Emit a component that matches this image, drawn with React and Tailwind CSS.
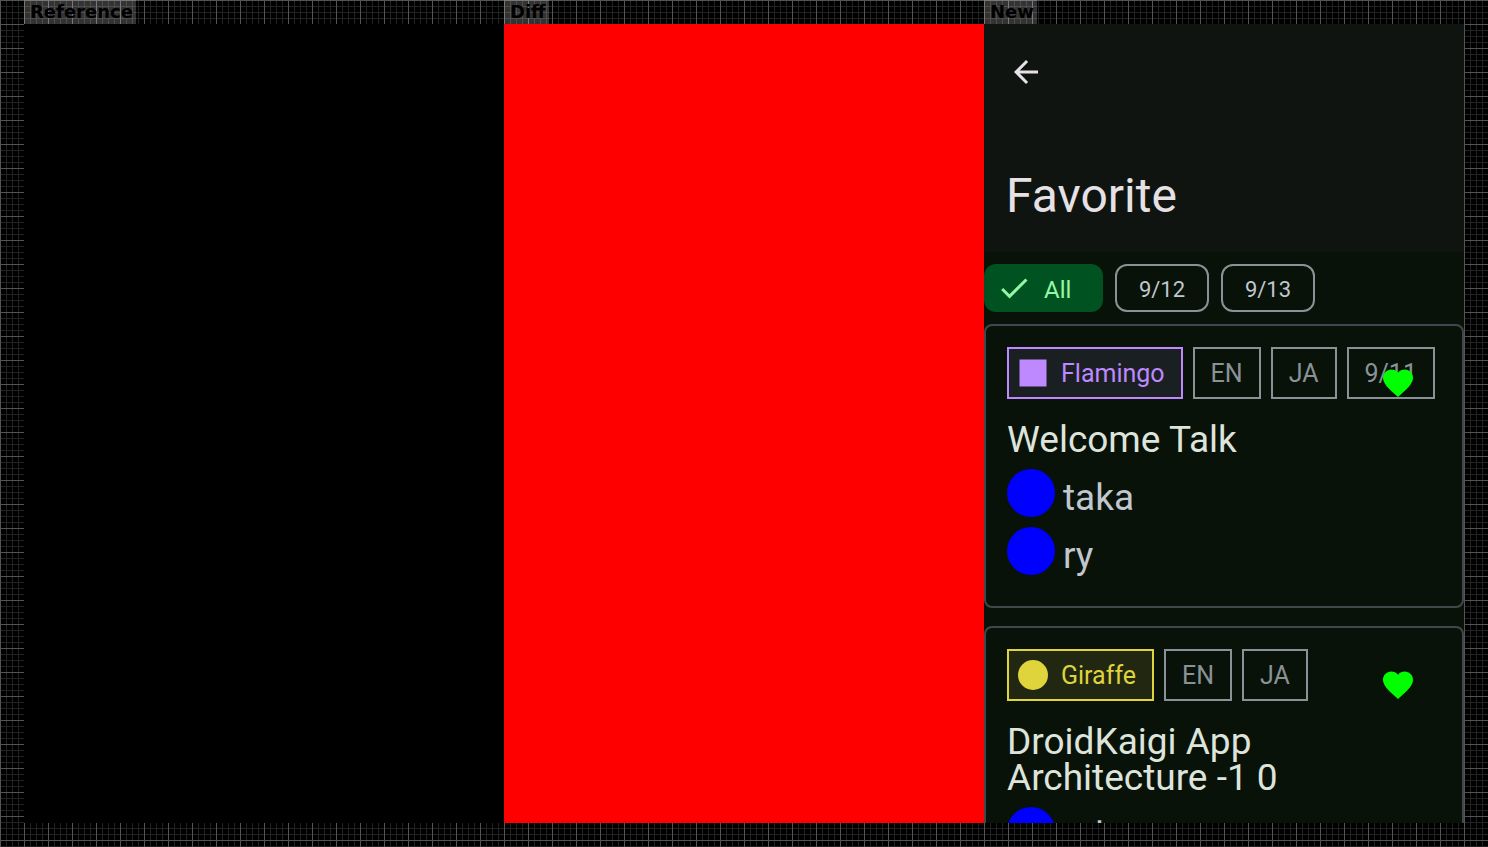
const ROOMS = {
  flamingo: {
    name: "Flamingo",
    tag: "border-[#be88ff] bg-[#1a2022] text-[#be88ff]",
    shape: <rect x="4.5" y="4.5" width="27" height="27" />,
  },
  giraffe: {
    name: "Giraffe",
    tag: "border-[#dfd43c] bg-[#222712] text-[#dfd43c]",
    shape: <circle cx="18" cy="18" r="15" />,
  },
};

const SESSIONS = [
  {
    title: "Welcome Talk",
    room: ROOMS.flamingo,
    labels: ["EN", "JA", "9/11"],
    speakers: ["taka", "ry"],
  },
  {
    title: "DroidKaigi App Architecture -1 0",
    room: ROOMS.giraffe,
    labels: ["EN", "JA"],
    speakers: ["taka"],
  },
];

function Panel({ label, className, children }) {
  return (
    <section className="flex min-w-0 flex-1 flex-col items-start">
      <h2 className="h-6 bg-white/20 pr-[3px] pl-1.5 font-['DejaVu_Sans',sans-serif] text-[18px] leading-6 font-bold text-black">
        {label}
      </h2>
      <div className={"min-h-0 w-full flex-1 overflow-hidden " + className}>{children}</div>
    </section>
  );
}

function DateChip({ children }) {
  return (
    <button
      type="button"
      className="h-12 min-w-[94px] rounded-xl border-2 border-[#8b9297] px-5 pt-1 text-[22px] leading-6 text-[#c1c7ce]"
    >
      {children}
    </button>
  );
}

function SessionCard({ session }) {
  return (
    <article className="relative rounded-lg border-2 border-[#41484d] p-[21px]">
      <div className="flex gap-2.5">
        <span
          className={
            "flex h-[52px] items-center gap-2.5 border-2 pr-4 pl-1.5 text-[25px] leading-8 " +
            session.room.tag
          }
        >
          <svg viewBox="0 0 36 36" className="size-9" fill="currentColor" aria-hidden="true">
            {session.room.shape}
          </svg>
          <span className="pt-0.5">{session.room.name}</span>
        </span>
        {session.labels.map((label) => (
          <span
            key={label}
            className="flex h-[52px] items-center border-2 border-[#8b9297] px-4 pt-0.5 text-[25px] leading-8 text-[#8b9297]"
          >
            {label}
          </span>
        ))}
      </div>
      <h3 className="mt-[23px] w-[330px] max-w-full text-[37px] leading-9 text-[#dee4db]">
        {session.title}
      </h3>
      <ul className="mt-[11px]">
        {session.speakers.map((name) => (
          <li key={name} className="flex items-start gap-2">
            <span className="size-12 rounded-full bg-[#0000ff]" />
            <span className="text-[37px] leading-[58px] text-[#c1c7ce]">{name}</span>
          </li>
        ))}
      </ul>
      <button
        type="button"
        aria-label="Remove from favorites"
        className="absolute top-[9px] right-4 flex size-24 items-center justify-center"
      >
        <svg viewBox="0 0 24 24" className="size-9" fill="#00ff00" aria-hidden="true">
          <path d="M12 21.35l-1.45-1.32C5.4 15.36 2 12.28 2 8.5 2 5.42 4.42 3 7.5 3c1.74 0 3.41.81 4.5 2.09C13.09 3.81 14.76 3 16.5 3 19.58 3 22 5.42 22 8.5c0 3.78-3.4 6.86-8.55 11.54L12 21.35z" />
        </svg>
      </button>
    </article>
  );
}

function FavoriteScreen() {
  return (
    <div className="font-[Roboto,sans-serif]">
      <header className="flex h-[228px] flex-col items-start justify-between bg-[#101411] px-[22px] pt-[30px] pb-7 text-[#e6e1e5]">
        <button type="button" aria-label="Back" className="px-0.5">
          <svg viewBox="0 0 24 24" className="size-9" fill="currentColor" aria-hidden="true">
            <path d="M20 11H7.83l5.59-5.59L12 4l-8 8 8 8 1.41-1.41L7.83 13H20v-2z" />
          </svg>
        </button>
        <h1 className="text-[48px] leading-[56px]">Favorite</h1>
      </header>
      <div className="flex gap-3 py-3">
        <button
          type="button"
          aria-pressed="true"
          className="flex h-12 min-w-[119px] items-center gap-3 rounded-xl bg-[#005221] pr-7 pl-3 text-[24px] leading-6 text-[#95f7a5]"
        >
          <svg viewBox="0 0 24 24" className="size-9" fill="currentColor" aria-hidden="true">
            <path d="M9 16.17L4.83 12l-1.42 1.41L9 19 21 7l-1.41-1.41z" />
          </svg>
          <span className="pt-1">All</span>
        </button>
        <DateChip>9/12</DateChip>
        <DateChip>9/13</DateChip>
      </div>
      <div className="flex flex-col gap-[18px]">
        {SESSIONS.map((session) => (
          <SessionCard key={session.title} session={session} />
        ))}
      </div>
    </div>
  );
}

export default function App() {
  return (
    <main className="flex h-screen overflow-hidden bg-black bg-[linear-gradient(#555_1px,transparent_1px),linear-gradient(90deg,#555_1px,transparent_1px),linear-gradient(#222_1px,transparent_1px),linear-gradient(90deg,#222_1px,transparent_1px)] bg-[size:24px_24px,24px_24px,6px_6px,6px_6px] px-6 pb-6">
      <Panel label="Reference" className="bg-black" />
      <Panel label="Diff" className="bg-[#ff0000]" />
      <Panel label="New" className="bg-[#081208]">
        <FavoriteScreen />
      </Panel>
    </main>
  );
}
